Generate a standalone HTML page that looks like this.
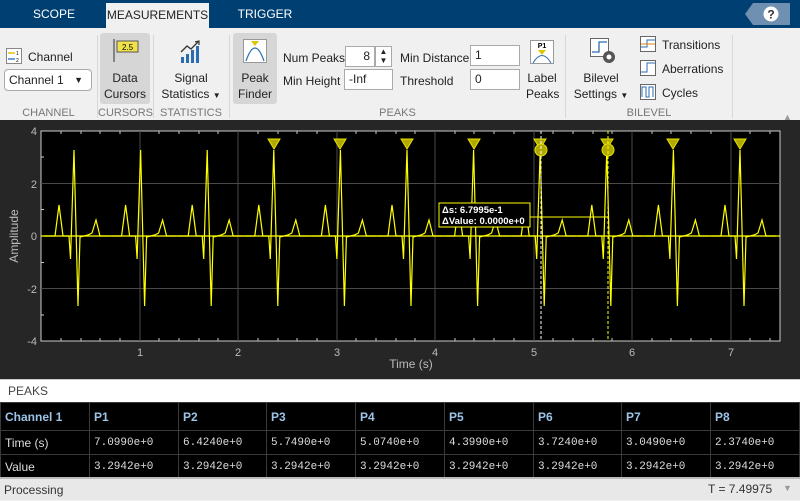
<!DOCTYPE html>
<html><head><meta charset="utf-8"><style>
*{margin:0;padding:0;box-sizing:border-box}
body{width:800px;height:500px;overflow:hidden;font-family:"Liberation Sans",sans-serif;background:#f0f0f0;position:relative;font-size:12px;color:#222}
.abs{position:absolute}
.tabbar{left:0;top:0;width:800px;height:28px;background:#003f72}
.tab{top:0;height:28px;line-height:28px;color:#fff;font-size:12px;text-align:center}
.tb{left:0;top:28px;width:800px;height:92px;background:#f0f0f0}
.lbl{font-size:11px;color:#777;top:107px;text-align:center}
.sep{top:35px;width:1px;height:83px;background:#d8d8d8}
.btn{font-size:12px;text-align:center;line-height:16px;color:#222}
.inp{background:#fff;border:1px solid #aaa;height:21px;font-size:12px;line-height:19px;padding-left:4px}
table{border-collapse:collapse;position:absolute;left:0;top:402px;width:800px;background:#000;table-layout:fixed}
td{border:1px solid #3a3a3a;color:#ddd;font-size:12px;padding-left:4px;height:24px;overflow:hidden;white-space:nowrap}
tr.h td{color:#9cc3e8;font-weight:bold;font-size:12px;height:28px}
td.m{font-family:"Liberation Mono",monospace;font-size:11px}
</style></head><body>
<div class="abs tabbar"></div>
<div class="abs tab" style="left:20px;width:68px">SCOPE</div>
<div class="abs tab" style="left:106px;width:103px;top:3px;height:25px;line-height:24px;background:#f0f0f0;color:#222">MEASUREMENTS</div>
<div class="abs tab" style="left:230px;width:70px">TRIGGER</div>
<svg class="abs" style="left:745px;top:3px" width="45" height="22"><polygon points="8,0 45,0 45,22 8,22 0,11" fill="#6f90b0"/><circle cx="26" cy="11" r="7.5" fill="#fff"/><text x="26" y="15.5" font-size="12" font-weight="bold" text-anchor="middle" fill="#333" font-family="Liberation Sans">?</text></svg>

<div class="abs tb"></div>
<svg class="abs" style="left:6px;top:48px" width="16" height="16"><rect x="0.5" y="0.5" width="15" height="15" fill="#fff" stroke="#888"/><line x1="2" y1="5" x2="9" y2="5" stroke="#e6c200" stroke-width="1.5"/><line x1="2" y1="11" x2="9" y2="11" stroke="#3a7fd0" stroke-width="1.5"/><text x="10" y="7" font-size="5">1</text><text x="10" y="14" font-size="5">2</text></svg>
<div class="abs btn" style="left:28px;top:49px">Channel</div>
<div class="abs" style="left:4px;top:69px;width:88px;height:22px;border:1px solid #aaa;border-radius:4px;background:#fff;font-size:12px;line-height:20px;padding-left:4px">Channel 1<span style="position:absolute;right:8px;top:0;font-size:9px">▼</span></div>
<div class="abs lbl" style="left:0;width:97px">CHANNEL</div>
<div class="abs sep" style="left:97px"></div>
<div class="abs" style="left:100px;top:33px;width:50px;height:71px;background:#d6d6d6;border-radius:3px"></div>
<svg class="abs" style="left:112px;top:38px" width="28" height="26"><line x1="2" y1="1" x2="2" y2="24" stroke="#333"/><rect x="5" y="3" width="21" height="11" fill="#f2e24a" stroke="#555"/><text x="15.5" y="12" font-size="8" text-anchor="middle">2.5</text></svg>
<div class="abs btn" style="left:100px;top:70px;width:50px">Data<br>Cursors</div>
<div class="abs lbl" style="left:98px;width:55px">CURSORS</div>
<div class="abs sep" style="left:153px"></div>
<svg class="abs" style="left:178px;top:40px" width="26" height="24"><rect x="3" y="17" width="3" height="6" fill="#2a6db5"/><rect x="8" y="14" width="3" height="9" fill="#2a6db5"/><rect x="13" y="10" width="3" height="13" fill="#2a6db5"/><rect x="18" y="6" width="3" height="17" fill="#2a6db5"/><polyline points="3,12 9,6 13,9 20,2" fill="none" stroke="#333" stroke-width="1.3"/><polyline points="17,2 21,1 21,5" fill="none" stroke="#333" stroke-width="1.2"/></svg>
<div class="abs btn" style="left:156px;top:70px;width:70px">Signal<br>Statistics <span style="font-size:8px">▼</span></div>
<div class="abs lbl" style="left:156px;width:70px">STATISTICS</div>
<div class="abs sep" style="left:229px"></div>
<div class="abs" style="left:233px;top:33px;width:44px;height:71px;background:#d6d6d6;border-radius:3px"></div>
<svg class="abs" style="left:243px;top:39px" width="24" height="24"><rect x="0.5" y="0.5" width="23" height="23" fill="#fff" stroke="#999"/><path d="M3 22 Q12 -4 21 22" fill="none" stroke="#2a6db5" stroke-width="1.2"/><polygon points="8,2 16,2 12,7" fill="#e0c400"/></svg>
<div class="abs btn" style="left:233px;top:70px;width:44px">Peak<br>Finder</div>
<div class="abs btn" style="left:283px;top:50px">Num Peaks</div>
<div class="abs inp" style="left:345px;top:46px;width:30px;text-align:right;padding-right:4px">8</div>
<div class="abs" style="left:375px;top:46px;width:17px;height:21px;border:1px solid #aaa;background:#fff;font-size:8px;line-height:9px;text-align:center">▲<br>▼</div>
<div class="abs btn" style="left:283px;top:73px">Min Height</div>
<div class="abs inp" style="left:344px;top:69px;width:49px">-Inf</div>
<div class="abs btn" style="left:400px;top:50px">Min Distance</div>
<div class="abs inp" style="left:470px;top:45px;width:50px">1</div>
<div class="abs btn" style="left:400px;top:73px">Threshold</div>
<div class="abs inp" style="left:470px;top:69px;width:50px">0</div>
<svg class="abs" style="left:530px;top:40px" width="24" height="24"><rect x="0.5" y="0.5" width="23" height="23" fill="#fff" stroke="#999"/><text x="12" y="8" font-size="7" text-anchor="middle" font-weight="bold">P1</text><path d="M3 23 Q12 8 21 23" fill="none" stroke="#2a6db5"/><polygon points="8,10 16,10 12,15" fill="#e0c400"/></svg>
<div class="abs btn" style="left:526px;top:70px;width:32px">Label<br>Peaks</div>
<div class="abs lbl" style="left:280px;width:235px">PEAKS</div>
<div class="abs sep" style="left:565px"></div>
<svg class="abs" style="left:590px;top:38px" width="26" height="26"><rect x="0.5" y="0.5" width="18" height="18" fill="#fff" stroke="#666"/><polyline points="2,14 9,14 9,4 17,4" fill="none" stroke="#2a6db5" stroke-width="1.3"/><circle cx="19" cy="19" r="6" fill="#555"/><circle cx="19" cy="19" r="2.5" fill="#fff"/></svg>
<div class="abs btn" style="left:570px;top:70px;width:62px">Bilevel<br>Settings <span style="font-size:8px">▼</span></div>
<svg class="abs" style="left:640px;top:36px" width="16" height="16"><rect x="0.5" y="0.5" width="15" height="15" fill="#fff" stroke="#666"/><polyline points="1,11 7,11 7,4 15,4" fill="none" stroke="#2a6db5"/><line x1="1" y1="8" x2="15" y2="8" stroke="#e08a00"/></svg>
<div class="abs btn" style="left:662px;top:37px">Transitions</div>
<svg class="abs" style="left:640px;top:60px" width="16" height="16"><rect x="0.5" y="0.5" width="15" height="15" fill="#fff" stroke="#666"/><polyline points="1,12 7,12 7,3 15,3" fill="none" stroke="#2a6db5"/></svg>
<div class="abs btn" style="left:662px;top:61px">Aberrations</div>
<svg class="abs" style="left:640px;top:84px" width="16" height="16"><rect x="0.5" y="0.5" width="15" height="15" fill="#fff" stroke="#666"/><polyline points="2,13 2,3 6,3 6,13 9,13 9,3 13,3 13,13" fill="none" stroke="#2a6db5"/></svg>
<div class="abs btn" style="left:662px;top:85px">Cycles</div>
<div class="abs lbl" style="left:566px;width:166px">BILEVEL</div>
<div class="abs sep" style="left:732px"></div>
<div class="abs" style="left:783px;top:112px;font-size:9px;color:#999">▲</div>

<svg class="abs" style="left:0;top:120px" width="800" height="259" viewBox="0 120 800 259">
<rect x="0" y="120" width="800" height="259" fill="#262626"/>
<rect x="41" y="131" width="739" height="210" fill="#000" stroke="#ccc" stroke-width="1"/>
<g stroke="#4a4a4a" stroke-width="1">
<line x1="41" y1="183.5" x2="780" y2="183.5"/><line x1="41" y1="236" x2="780" y2="236"/><line x1="41" y1="288.5" x2="780" y2="288.5"/>
<line x1="140" y1="131" x2="140" y2="341"/><line x1="238" y1="131" x2="238" y2="341"/><line x1="337" y1="131" x2="337" y2="341"/><line x1="435" y1="131" x2="435" y2="341"/><line x1="534" y1="131" x2="534" y2="341"/><line x1="632" y1="131" x2="632" y2="341"/><line x1="731" y1="131" x2="731" y2="341"/>
</g>
<g stroke="#ccc" stroke-width="1">
<path d="M61 131v3M81 131v3M100 131v3M120 131v3M159 131v3M179 131v3M199 131v3M218 131v3M258 131v3M278 131v3M297 131v3M317 131v3M356 131v3M376 131v3M396 131v3M415 131v3M455 131v3M474 131v3M494 131v3M514 131v3M553 131v3M573 131v3M593 131v3M612 131v3M652 131v3M671 131v3M691 131v3M711 131v3M750 131v3M770 131v3"/>
<path d="M61 341v-3M81 341v-3M100 341v-3M120 341v-3M159 341v-3M179 341v-3M199 341v-3M218 341v-3M258 341v-3M278 341v-3M297 341v-3M317 341v-3M356 341v-3M376 341v-3M396 341v-3M415 341v-3M455 341v-3M474 341v-3M494 341v-3M514 341v-3M553 341v-3M573 341v-3M593 341v-3M612 341v-3M652 341v-3M671 341v-3M691 341v-3M711 341v-3M750 341v-3M770 341v-3"/>
<path d="M41 157h3M41 209.5h3M41 262.5h3M41 315h3"/>
</g>
<defs><path id="b" d="M-30 236 L-19 236 L-15 205 L-11 236 L-5 236 L-3.5 259 L0 150 L4 306 L6 237 L14 235 L18 233 L22 220 L26 236 L36 236" fill="none" stroke="#ffff00" stroke-width="1.2"/></defs>
<line x1="41" y1="236" x2="780" y2="236" stroke="#ffff00" stroke-width="1.2"/>
<use href="#b" x="74"/><use href="#b" x="140.6"/><use href="#b" x="207.2"/><use href="#b" x="273.8"/><use href="#b" x="340.4"/><use href="#b" x="407"/><use href="#b" x="473.6"/><use href="#b" x="540.2"/><use href="#b" x="606.8"/><use href="#b" x="673.4"/><use href="#b" x="740"/>
<g fill="#b0aa00" stroke="#e8e000" stroke-width="1">
<polygon points="268,139 280,139 274,149"/><polygon points="334,139 346,139 340,149"/><polygon points="401,139 413,139 407,149"/><polygon points="468,139 480,139 474,149"/><polygon points="534,139 546,139 540,149"/><polygon points="601,139 613,139 607,149"/><polygon points="667,139 679,139 673,149"/><polygon points="734,139 746,139 740,149"/>
<circle cx="541" cy="150" r="6"/><circle cx="608" cy="150" r="6"/>
</g>
<line x1="541" y1="131" x2="541" y2="341" stroke="#fff" stroke-dasharray="3,2"/>
<line x1="608" y1="131" x2="608" y2="341" stroke="#ffff00" stroke-dasharray="3,2"/>
<line x1="530" y1="217" x2="608" y2="217" stroke="#ffff00"/>
<rect x="439" y="203" width="91" height="24" fill="#000" stroke="#ffff00"/>
<text x="442" y="213" font-size="9.5" fill="#fff" font-family="Liberation Sans" font-weight="bold">Δs: 6.7995e-1</text>
<text x="442" y="224" font-size="9.5" fill="#fff" font-family="Liberation Sans" font-weight="bold">ΔValue: 0.0000e+0</text>
<g fill="#bbb" font-size="11" font-family="Liberation Sans" text-anchor="end">
<text x="37" y="135">4</text><text x="37" y="188">2</text><text x="37" y="240">0</text><text x="37" y="293">-2</text><text x="37" y="345">-4</text>
</g>
<g fill="#bbb" font-size="11" font-family="Liberation Sans" text-anchor="middle">
<text x="140" y="356">1</text><text x="238" y="356">2</text><text x="337" y="356">3</text><text x="435" y="356">4</text><text x="534" y="356">5</text><text x="632" y="356">6</text><text x="731" y="356">7</text>
<text x="411" y="368" font-size="12">Time (s)</text>
<text x="0" y="0" font-size="12" transform="translate(18,236) rotate(-90)">Amplitude</text>
</g>
</svg>

<div class="abs" style="left:0;top:379px;width:800px;height:23px;background:#fff;border-top:1px solid #ccc;font-size:12px;line-height:22px;padding-left:8px;color:#444">PEAKS</div>
<table>
<colgroup><col style="width:89px"><col style="width:89px"><col style="width:88px"><col style="width:89px"><col style="width:89px"><col style="width:89px"><col style="width:88px"><col style="width:89px"><col></colgroup>
<tr class="h"><td>Channel 1</td><td>P1</td><td>P2</td><td>P3</td><td>P4</td><td>P5</td><td>P6</td><td>P7</td><td>P8</td></tr>
<tr><td>Time (s)</td><td class="m">7.0990e+0</td><td class="m">6.4240e+0</td><td class="m">5.7490e+0</td><td class="m">5.0740e+0</td><td class="m">4.3990e+0</td><td class="m">3.7240e+0</td><td class="m">3.0490e+0</td><td class="m">2.3740e+0</td></tr>
<tr><td style="height:21px">Value</td><td class="m">3.2942e+0</td><td class="m">3.2942e+0</td><td class="m">3.2942e+0</td><td class="m">3.2942e+0</td><td class="m">3.2942e+0</td><td class="m">3.2942e+0</td><td class="m">3.2942e+0</td><td class="m">3.2942e+0</td></tr>
</table>
<div class="abs" style="left:0;top:477px;width:800px;height:23px;background:#e8e8e8;border-top:2px solid #bbb;font-size:12px;line-height:22px;padding-left:4px;color:#333">Processing</div>
<div class="abs" style="left:708px;top:478px;font-size:12px;line-height:22px;color:#333">T = 7.49975</div>
<div class="abs" style="left:783px;top:483px;font-size:9px;color:#999">▼</div>
</body></html>
